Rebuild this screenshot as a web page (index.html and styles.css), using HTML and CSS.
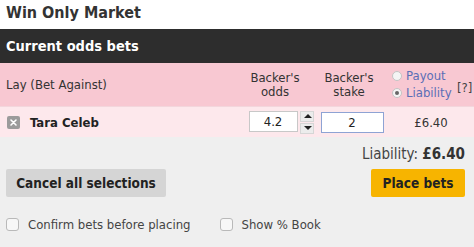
FILE: index.html
```html
<!DOCTYPE html>
<html>
<head>
    <title>Win Only Market</title>
    <link rel="stylesheet" href="styles.css">
</head>
<body>
    <div class="market">
        <h1 class="market-title">Win Only Market</h1>

        <div class="panel-head">Current odds bets</div>

        <div class="bet-grid bets-head">
            <div class="col-label">Lay (Bet Against)</div>
            <div class="col-head">Backer's<br>odds</div>
            <div class="col-head">Backer's<br>stake</div>
            <div class="col-mode">
                <label class="radio"><span class="radio-dot"></span>Payout</label>
                <label class="radio"><span class="radio-dot checked"></span>Liability</label>
            </div>
            <div class="col-help">[?]</div>
        </div>

        <div class="bet-grid bet-row">
            <div class="col-label runner">
                <span class="remove">
                    <svg width="13" height="13" viewBox="0 0 13 13">
                        <rect x="0" y="0" width="13" height="13" rx="2" fill="#9b9b9b"/>
                        <path d="M4 4 L9 9 M9 4 L4 9" stroke="#fff" stroke-width="1.6" stroke-linecap="round"/>
                    </svg>
                </span>
                Tara Celeb
            </div>
            <div class="col-input">
                <div class="odds-box">
                    <input class="field" type="text" value="4.2">
                    <div class="spinner">
                        <span class="spin up"></span>
                        <span class="spin down"></span>
                    </div>
                </div>
            </div>
            <div class="col-input">
                <input class="field stake" type="text" value="2">
            </div>
            <div class="col-result">£6.40</div>
        </div>

        <div class="footer">
            <div class="liability">Liability: <strong>£6.40</strong></div>
            <div class="actions">
                <button class="btn btn-cancel">Cancel all selections</button>
                <button class="btn btn-place">Place bets</button>
            </div>
            <div class="options">
                <label class="check"><span class="check-box"></span>Confirm bets before placing</label>
                <label class="check"><span class="check-box"></span>Show % Book</label>
            </div>
        </div>
    </div>
</body>
</html>
```

FILE: styles.css
```css
body {
    margin: 0;
    font-family: "DejaVu Sans Condensed", "DejaVu Sans", sans-serif;
    font-size: 13px;
    color: #333;
    background: #fff;
}
.market {
    width: 474px;
}
.market-title {
    margin: 0;
    height: 29px;
    padding: 0 6px;
    font-size: 16px;
    line-height: 26px;
    color: #333;
}
.panel-head {
    height: 34px;
    padding: 0 6px;
    background: #2d2d2d;
    color: #fff;
    font-weight: bold;
    font-size: 14.5px;
    line-height: 34px;
}
.bet-grid {
    display: grid;
    grid-template-columns: 240px 76px 72px 66px 20px;
    align-items: center;
}
.bets-head {
    height: 44px;
    background: #f8c8d2;
    border-bottom: 1px solid #f3d6dc;
    box-sizing: border-box;
}
.col-label {
    padding-left: 6px;
}
.col-head {
    text-align: center;
    line-height: 14px;
    padding-right: 6px;
}
.col-mode {
    display: flex;
    flex-direction: column;
    gap: 1px;
    padding-left: 4px;
}
.radio {
    display: flex;
    align-items: center;
    gap: 4px;
    color: #5b6eb6;
    line-height: 16px;
}
.radio-dot {
    width: 10px;
    height: 10px;
    border-radius: 50%;
    border: 1px solid #c4c4c4;
    background: #f4f4f4;
    box-sizing: border-box;
    position: relative;
}
.radio-dot.checked::after {
    content: "";
    position: absolute;
    left: 2px;
    top: 2px;
    width: 4px;
    height: 4px;
    border-radius: 50%;
    background: #666;
}
.col-help {
    color: #444;
    padding-left: 3px;
    padding-top: 6px;
}
.bet-row {
    height: 30px;
    background: #fde8ec;
}
.runner {
    display: flex;
    align-items: center;
    gap: 10px;
    padding-left: 7px;
    font-weight: bold;
    font-size: 13px;
    color: #222;
}
.remove svg {
    display: block;
}
.col-input {
    display: flex;
    justify-content: center;
}
.odds-box {
    display: flex;
    margin-left: 6px;
}
.field {
    height: 21px;
    box-sizing: border-box;
    border: 1px solid #c8c8c8;
    background: #fff;
    font-family: inherit;
    font-size: 13px;
    color: #222;
    text-align: center;
    padding: 0;
    width: 49px;
}
.field.stake {
    width: 63px;
    border-color: #8ea3d4;
}
.spinner {
    display: flex;
    flex-direction: column;
    justify-content: center;
    gap: 1px;
    width: 14px;
    margin-left: 2px;
}
.spin {
    height: 9px;
    background: #ececec;
    border: 1px solid #d6d6d6;
    position: relative;
}
.spin::after {
    content: "";
    position: absolute;
    left: 3px;
    border-left: 4px solid transparent;
    border-right: 4px solid transparent;
}
.spin.up::after {
    top: 2px;
    border-bottom: 4px solid #222;
}
.spin.down::after {
    top: 2px;
    border-top: 4px solid #222;
}
.col-result {
    grid-column: span 2;
    text-align: center;
    color: #333;
}
.footer {
    height: 110px;
    background: #efefef;
    padding: 0 9px 0 6px;
}
.liability {
    text-align: right;
    font-size: 15px;
    padding-top: 8px;
    height: 24px;
    color: #444;
}
.liability strong {
    color: #333;
}
.actions {
    display: flex;
    justify-content: space-between;
}
.btn {
    height: 28px;
    border: none;
    border-radius: 2px;
    font-family: inherit;
    font-weight: bold;
    font-size: 13.5px;
    color: #222;
    padding: 0;
    margin: 0;
    white-space: nowrap;
}
.btn-cancel {
    width: 160px;
    background: #d5d5d5;
}
.btn-place {
    width: 94px;
    background: #f7b400;
}
.options {
    display: flex;
    gap: 29px;
    margin-top: 20px;
}
.check {
    display: flex;
    align-items: center;
    gap: 9px;
    color: #444;
}
.check-box {
    width: 13px;
    height: 13px;
    box-sizing: border-box;
    border: 1px solid #b9b9b9;
    border-radius: 3px;
    background: #f7f7f7;
}
```
